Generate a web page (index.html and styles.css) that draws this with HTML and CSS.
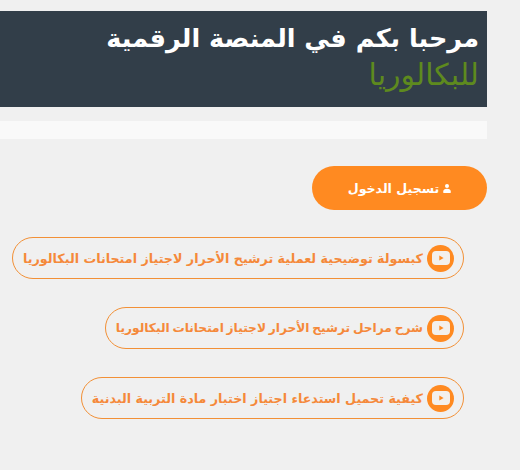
FILE: index.html
```html
<!DOCTYPE html>
<html lang="ar" dir="rtl">
<head>
<meta charset="utf-8">
<title>المنصة الرقمية للبكالوريا</title>
<link rel="stylesheet" href="styles.css">
</head>
<body>
<main class="page">
  <header class="banner">
    <h1 class="banner-title">مرحبا بكم في المنصة الرقمية</h1>
    <div class="banner-sub">للبكالوريا</div>
  </header>
  <div class="strip"></div>
  <a class="login" href="#">
    <svg class="user-icon" viewBox="0 0 8 9" aria-hidden="true"><circle cx="4" cy="2.1" r="2"/><path d="M0.3 9V7.2C0.3 5.6 1.5 4.7 4 4.7S7.7 5.6 7.7 7.2V9Z"/></svg>
    <span>تسجيل الدخول</span>
  </a>
  <ul class="links">
    <li><a class="pill" href="#">
      <span class="yt"><svg viewBox="0 0 18 14" aria-hidden="true"><rect width="18" height="14" rx="4" fill="#f3f0ec"/><path d="M7.3 4.6L11.6 7L7.3 9.4Z" fill="#ff8a21"/></svg></span>
      <span>كبسولة توضيحية لعملية ترشيح الأحرار لاجتياز امتحانات البكالوريا</span>
    </a></li>
    <li><a class="pill pill-second" href="#">
      <span class="yt"><svg viewBox="0 0 18 14" aria-hidden="true"><rect width="18" height="14" rx="4" fill="#f3f0ec"/><path d="M7.3 4.6L11.6 7L7.3 9.4Z" fill="#ff8a21"/></svg></span>
      <span>شرح مراحل ترشيح الأحرار لاجتياز امتحانات البكالوريا</span>
    </a></li>
    <li><a class="pill" href="#">
      <span class="yt"><svg viewBox="0 0 18 14" aria-hidden="true"><rect width="18" height="14" rx="4" fill="#f3f0ec"/><path d="M7.3 4.6L11.6 7L7.3 9.4Z" fill="#ff8a21"/></svg></span>
      <span>كيفية تحميل استدعاء اجتياز اختبار مادة التربية البدنية</span>
    </a></li>
  </ul>
</main>
</body>
</html>
```
FILE: styles.css
```css
* { box-sizing: border-box; }
html, body { margin: 0; padding: 0; }
body {
  width: 520px;
  height: 470px;
  overflow: hidden;
  background: #f0f0f0;
  font-family: "DejaVu Sans", sans-serif;
}
.page {
  width: 487px;
  padding-top: 11px;
  margin-right: 33px;
}
.banner {
  height: 96px;
  padding: 9px 8px 0 0;
  background: #323e49;
}
.banner-title {
  margin: 0;
  font-size: 25.5px;
  line-height: 37px;
  font-weight: 700;
  color: #ffffff;
}
.banner-sub {
  font-size: 30px;
  line-height: 36px;
  color: #5e8a1e;
}
.strip {
  height: 18px;
  margin-top: 14px;
  background: #f9f9f9;
}
.login {
  display: flex;
  align-items: center;
  justify-content: center;
  gap: 4px;
  width: 175px;
  height: 44px;
  margin-top: 27px;
  border-radius: 22px;
  background: #ff8a21;
  color: #ffffff;
  font-size: 12.6px;
  font-weight: 700;
  text-decoration: none;
}
.user-icon { width: 8px; height: 9px; fill: #ffffff; flex: none; }
.links {
  list-style: none;
  margin: 27px 23px 0 0;
  padding: 0;
  display: flex;
  flex-direction: column;
  align-items: flex-start;
  gap: 28px;
}
.pill {
  display: flex;
  align-items: center;
  gap: 4px;
  height: 42px;
  padding: 0 9px 0 10px;
  border: 1px solid #f29036;
  border-radius: 21px;
  color: #f5893a;
  font-size: 12.7px;
  font-weight: 700;
  text-decoration: none;
  white-space: nowrap;
}
.pill-second { font-size: 12.2px; word-spacing: -1.5px; }
.yt {
  display: flex;
  align-items: center;
  justify-content: center;
  width: 27px;
  height: 27px;
  border-radius: 50%;
  background: #ff8a21;
  flex: none;
}
.yt svg { width: 18px; height: 14px; }
```
